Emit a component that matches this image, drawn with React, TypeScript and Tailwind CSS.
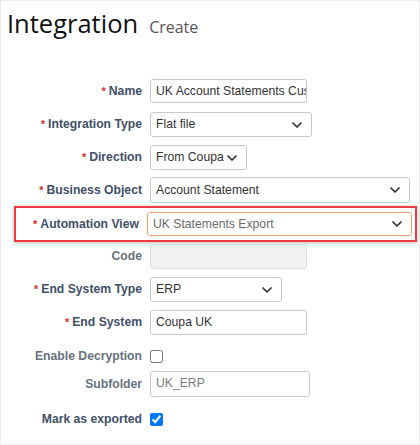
import { ChevronDown } from "lucide-react";

function Label({ text, required, tone = "dark", width = "w-[141px]" }: { text: string; required?: boolean; tone?: "dark" | "light"; width?: string }) {
  return (
    <div className={`${width} shrink-0 text-right text-[12.2px] font-bold leading-none ${tone === "dark" ? "text-[#3f5068]" : "text-[#68727e]"}`}>
      {required && <span className="mr-[3px] text-[11px] text-[#d92e2e]">*</span>}
      {text}
    </div>
  );
}

function TextBox({ value, width, placeholder }: { value?: string; width: string; placeholder?: boolean }) {
  return (
    <div className={`${width} h-full overflow-hidden whitespace-nowrap rounded-[3px] border border-[#c9c9c9] bg-white px-[5px] text-[12.2px] leading-[22px] ${placeholder ? "text-[#7b7b7b]" : "text-[#333]"}`}>
      {value}
    </div>
  );
}

function Select({ value, width, muted, focus }: { value: string; width: string; muted?: boolean; focus?: boolean }) {
  return (
    <div
      className={`${width} flex h-full items-center justify-between rounded-[3px] border bg-white pl-[5px] pr-[6px] text-[12.2px] ${focus ? "border-[#efa46c]" : "border-[#c9c9c9]"} ${muted ? "text-[#6b6b6b]" : "text-[#333]"}`}
    >
      <span className="whitespace-nowrap">{value}</span>
      <ChevronDown size={16} strokeWidth={2.6} className="text-[#333]" />
    </div>
  );
}

export default function App() {
  return (
    <div className="h-[445px] w-[420px] overflow-hidden border border-[#ececec] bg-white font-['Liberation_Sans',Arial,sans-serif]">
      {/* Page title */}
      <div className="flex items-baseline pl-[6px] pt-[2px] font-['Open_Sans',sans-serif]">
        <h1 className="text-[25.5px] leading-[40px] text-[#111]">Integration</h1>
        <span className="ml-[11px] text-[16px] text-[#555]">Create</span>
      </div>

      <div className="mt-[36px] flex flex-col">
        <div className="flex h-[24px] items-center gap-[8px]">
          <Label text="Name" required />
          <TextBox value="UK Account Statements Custom" width="w-[157px]" />
        </div>

        <div className="mt-[9px] flex h-[25px] items-center gap-[8px]">
          <Label text="Integration Type" required />
          <Select value="Flat file" width="w-[162px]" />
        </div>

        <div className="mt-[8px] flex h-[25px] items-center gap-[8px]">
          <Label text="Direction" required />
          <Select value="From Coupa" width="w-[97px]" />
        </div>

        <div className="mt-[7px] flex h-[26px] items-center gap-[8px]">
          <Label text="Business Object" required />
          <Select value="Account Statement" width="w-[260px]" />
        </div>

        {/* Highlighted row */}
        <div className="ml-[13px] mt-[3px] flex h-[36px] w-[403px] items-center gap-[8px] border-2 border-[#ee3b3f] pr-[3px] shadow-[0_1px_5px_rgba(0,0,0,0.25)]">
          <Label text="Automation View" required width="w-[123px]" />
          <div className="h-[24px]">
            <Select value="UK Statements Export" width="w-[265px]" muted focus />
          </div>
        </div>

        <div className="mt-[2px] flex h-[25px] items-center gap-[8px]">
          <Label text="Code" tone="light" />
          <div className="h-full w-[157px] rounded-[3px] border border-[#dcdcdc] bg-[#f1f1f1]" />
        </div>

        <div className="mt-[8px] flex h-[25px] items-center gap-[8px]">
          <Label text="End System Type" required />
          <Select value="ERP" width="w-[132px]" />
        </div>

        <div className="mt-[8px] flex h-[25px] items-center gap-[8px]">
          <Label text="End System" required />
          <TextBox value="Coupa UK" width="w-[157px]" />
        </div>

        <div className="mt-[11px] flex h-[20px] items-center gap-[8px]">
          <Label text="Enable Decryption" tone="light" />
          <input type="checkbox" className="m-0 h-[13px] w-[13px]" />
        </div>

        <div className="mt-[5px] flex h-[26px] items-center gap-[8px]">
          <Label text="Subfolder" tone="light" />
          <TextBox value="UK_ERP" width="w-[160px]" placeholder />
        </div>

        <div className="mt-[12px] flex h-[20px] items-center gap-[8px]">
          <Label text="Mark as exported" />
          <input type="checkbox" defaultChecked className="m-0 h-[13px] w-[13px]" />
        </div>
      </div>
    </div>
  );
}
